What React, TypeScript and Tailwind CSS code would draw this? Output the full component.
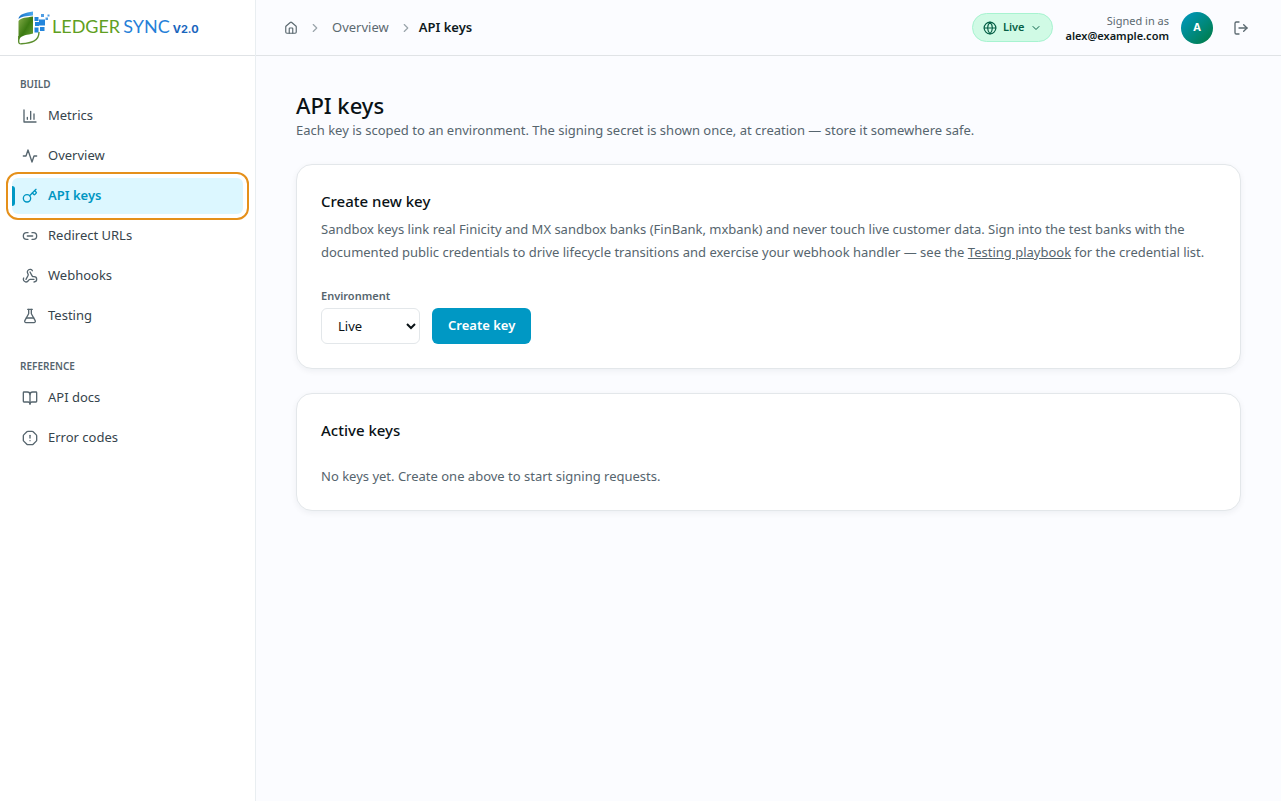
import React from "react";
import {
  BookOpen,
  ChevronDown,
  ChevronRight,
  FlaskConical,
  Globe,
  House,
  Key,
  Link2,
  LogOut,
  OctagonAlert,
  Webhook,
} from "lucide-react";

type IconProps = { size?: number; className?: string };
type NavItem = { label: string; icon: React.ComponentType<IconProps>; active?: boolean };
type NavGroup = { title: string; items: NavItem[] };

function StrokeIcon({ d, size = 16, className }: IconProps & { d: string }) {
  return (
    <svg
      width={size}
      height={size}
      viewBox="0 0 24 24"
      fill="none"
      stroke="currentColor"
      strokeWidth="2"
      strokeLinecap="round"
      strokeLinejoin="round"
      className={className}
      aria-hidden="true"
    >
      <path d={d} />
    </svg>
  );
}

const BarsIcon = (props: IconProps) => <StrokeIcon d="M3 3v18h18M18 17V9M13 17V5M8 17v-3" {...props} />;
const PulseIcon = (props: IconProps) => <StrokeIcon d="M22 12h-4l-3 9L9 3l-3 9H2" {...props} />;

const groups: NavGroup[] = [
  {
    title: "BUILD",
    items: [
      { label: "Metrics", icon: BarsIcon },
      { label: "Overview", icon: PulseIcon },
      { label: "API keys", icon: Key, active: true },
      { label: "Redirect URLs", icon: Link2 },
      { label: "Webhooks", icon: Webhook },
      { label: "Testing", icon: FlaskConical },
    ],
  },
  {
    title: "REFERENCE",
    items: [
      { label: "API docs", icon: BookOpen },
      { label: "Error codes", icon: OctagonAlert },
    ],
  },
];

function LogoMark() {
  return (
    <svg width="33" height="36" viewBox="0 0 33 36" aria-hidden="true">
      <defs>
        <linearGradient id="leaf" x1="0" y1="0" x2="1" y2="1">
          <stop offset="0" stopColor="#86ad4a" />
          <stop offset="0.5" stopColor="#3c7a12" />
          <stop offset="1" stopColor="#6fa53a" />
        </linearGradient>
        <linearGradient id="sky" x1="0" y1="0" x2="1" y2="0">
          <stop offset="0" stopColor="#1670c4" />
          <stop offset="1" stopColor="#4aa8ee" />
        </linearGradient>
      </defs>
      <path d="M1.500 9C2 4 8 3 16 1.500v4C9 6 4 6.500 1.500 9Z" fill="url(#sky)" />
      <path d="M1.500 11C4 7.500 10 7.500 16 6.500v17C11 25 4 25 2.500 29L1.500 31Z" fill="url(#leaf)" />
      <path
        d="M1.700 26v5.500c0 2 1 2.600 3 2.300C14 33 22 31.500 22 22"
        fill="none"
        stroke="#5b8f2e"
        strokeWidth="1.400"
      />
      <g fill="#2385dc">
        <path d="M17.500 7h4v4h-4zM22 9.500h6v6h-6zM18 12h4v4h-4zM23 17h4.500v4H23zM17.500 17.500h4v5h-4z" />
        <path d="M24 4h3v3h-3zM28.500 7.500h2.500v2.500h-2.500zM30.500 4.500h2v2h-2z" opacity="0.800" />
      </g>
    </svg>
  );
}

function Sidebar() {
  return (
    <aside className="flex w-64 shrink-0 flex-col border-r border-[#e9eef1] bg-white">
      <a href="#home" className="flex h-14 items-center border-b border-[#e0e3e6] pl-[17px]">
        <LogoMark />
        <span className="ml-[2px] flex items-baseline gap-[3px] font-[Lato,sans-serif] text-[18px] leading-6">
          <span className="text-[#5f9f22]">LEDGER</span>
          <span className="text-[#2580d8]">SYNC</span>
          <span className="font-[Inter,sans-serif] text-[11px] font-bold text-[#1a66bd]">V2.0</span>
        </span>
      </a>
      <nav className="flex flex-col gap-6 px-3 pt-5" aria-label="Main">
        {groups.map((group) => (
          <div key={group.title}>
            <h2 className="px-2 pb-1.5 text-[10px] leading-4 font-semibold text-[#56656e]">{group.title}</h2>
            <ul className="flex flex-col gap-1">
              {group.items.map(({ label, icon: Icon, active }) => (
                <li key={label}>
                  <a
                    href="#nav"
                    aria-current={active ? "page" : undefined}
                    className={
                      active
                        ? "relative flex h-9 items-center gap-2.5 rounded-md bg-[#dcf7ff] px-2.5 text-[13px] font-semibold text-[#0096c2] outline-2 outline-offset-4 outline-[#e5901a]"
                        : "flex h-9 items-center gap-2.5 rounded-md px-2.5 text-[13px] text-[#36444c]"
                    }
                  >
                    {active && <span className="absolute top-2 left-0 h-5 w-[3px] rounded-r-full bg-[#0098c4]" />}
                    <Icon size={16} className={active ? "text-[#0096c2]" : "text-[#56656e]"} />
                    {label}
                  </a>
                </li>
              ))}
            </ul>
          </div>
        ))}
      </nav>
    </aside>
  );
}

function Header() {
  return (
    <header className="flex h-14 items-center justify-between border-b border-[#e0e3e6] px-6">
      <nav className="flex items-center gap-1.5 text-[13px] text-[#5b6970]" aria-label="Breadcrumb">
        <a href="#home" aria-label="Home" className="px-1">
          <House size={14} />
        </a>
        <ChevronRight size={14} className="text-[#9aa5ab]" />
        <a href="#overview" className="px-1">
          Overview
        </a>
        <ChevronRight size={14} className="text-[#9aa5ab]" />
        <span className="font-semibold text-[#0e1a20]">API keys</span>
      </nav>
      <div className="flex items-center gap-3">
        <button
          type="button"
          className="flex h-[29px] items-center gap-1.5 rounded-full border border-[#a7f3d0] bg-[#d0fae5] px-2.5 text-[11px] font-semibold text-[#065f46]"
        >
          <Globe size={14} />
          Live
          <ChevronDown size={12} />
        </button>
        <div className="text-right text-[11px] leading-[15px]">
          <p className="text-[#5b6970]">Signed in as</p>
          <p className="font-semibold text-[#0e1a20]">alex@example.com</p>
        </div>
        <span className="flex size-8 items-center justify-center rounded-full bg-linear-to-br from-[#0098c4] to-[#08793c] text-[11px] font-bold text-white">
          A
        </span>
        <button
          type="button"
          aria-label="Sign out"
          className="flex size-8 items-center justify-center text-[#5b6970]"
        >
          <LogOut size={16} />
        </button>
      </div>
    </header>
  );
}

const cardClass = "rounded-2xl border border-[#e3e7ea] bg-white p-6 shadow-[0_2px_6px_rgba(15,30,50,0.06)]";

export default function App() {
  return (
    <div className="flex min-h-screen bg-[#fbfcff] font-['Noto_Sans',sans-serif]">
      <Sidebar />
      <div className="flex min-w-0 flex-1 flex-col">
        <Header />
        <main className="px-10 pt-[34px]">
          <h1 className="text-[22px] leading-[30px] font-medium text-[#0a1216]">API keys</h1>
          <p className="text-[13px] leading-5 text-[#56656e]">
            Each key is scoped to an environment. The signing secret is shown once, at creation — store it somewhere
            safe.
          </p>
          <div className="mt-6 flex flex-col gap-6">
            <section className={cardClass}>
              <h2 className="text-[15px] leading-6 font-medium text-[#0a1216]">Create new key</h2>
              <p className="mt-[5px] text-[13px] leading-[23px] text-[#56656e]">
                Sandbox keys link real Finicity and MX sandbox banks (FinBank, mxbank) and never touch live customer
                data. Sign into the test banks with the documented public credentials to drive lifecycle transitions
                and exercise your webhook handler — see the{" "}
                <a href="#testing" className="underline">
                  Testing playbook
                </a>{" "}
                for the credential list.
              </p>
              <form className="mt-6 flex items-end gap-3" onSubmit={(e) => e.preventDefault()}>
                <div className="flex flex-col gap-1">
                  <label htmlFor="environment" className="text-[11px] leading-4 font-semibold text-[#56656e]">
                    Environment
                  </label>
                  <select
                    id="environment"
                    defaultValue="Live"
                    className="h-9 w-[99px] rounded-md border border-[#e3e7ea] bg-white pl-3 text-[13px] text-[#0a1216]"
                  >
                    <option>Live</option>
                    <option>Sandbox</option>
                  </select>
                </div>
                <button type="submit" className="h-9 rounded-md bg-[#0098c4] px-4 text-[13px] font-semibold text-white">
                  Create key
                </button>
              </form>
            </section>
            <section className={cardClass}>
              <h2 className="text-[15px] leading-6 font-medium text-[#0a1216]">Active keys</h2>
              <p className="mt-6 text-[13px] leading-5 text-[#56656e]">
                No keys yet. Create one above to start signing requests.
              </p>
            </section>
          </div>
        </main>
      </div>
    </div>
  );
}
